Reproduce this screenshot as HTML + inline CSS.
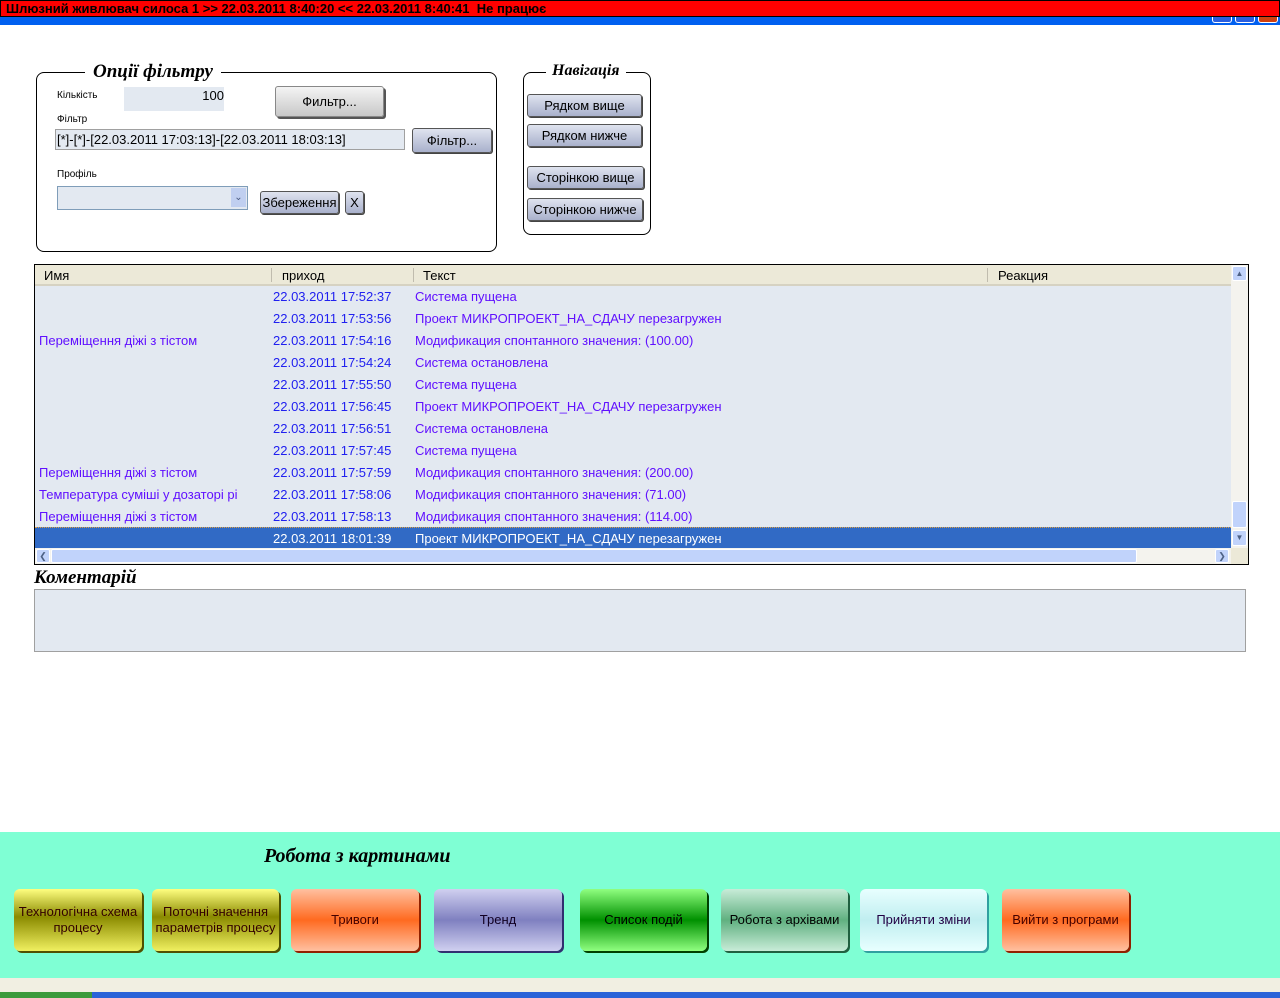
<!DOCTYPE html>
<html><head><meta charset="utf-8"><style>
*{box-sizing:border-box;margin:0;padding:0}
body{width:1280px;height:998px;position:relative;background:#fff;font-family:"Liberation Sans",sans-serif;overflow:hidden}
.abs{position:absolute}
.red{left:0;top:0;width:1280px;height:17px;background:#ff0000;border:1px solid #000;font:bold 13px "Liberation Sans",sans-serif;color:#000;line-height:15px;padding-left:5px;letter-spacing:0px}
.blue{left:0;top:17px;width:1280px;height:8px;background:#0060f0}
.grp{border:1px solid #000;border-radius:8px}
.leg{background:#fff;font:italic bold 19px "Liberation Serif",serif;padding:0 8px}
.lbl{font-size:10px;color:#000}
.inp{background:#e3e9f1;border:1px solid #a0a0a0}
.btn{border:1px solid #555;border-radius:3px;background:linear-gradient(#dfe3ef,#a9b1cc);font-size:13px;text-align:center;color:#000;box-shadow:1px 1px 0 #444}
.gbtn{background:linear-gradient(#f4f4f4,#c8c8c8);border:1px solid #888;box-shadow:2px 2px 0 #555}
.row{position:absolute;left:35px;width:1196px;height:22px;font-size:13px;line-height:22px;color:#6010ff}
.row span{position:absolute;top:0;white-space:nowrap}
.row .t{color:#2020f0}
.bb{position:absolute;top:889px;height:62px;border-radius:6px;font-size:13px;display:flex;align-items:center;justify-content:center;text-align:center;line-height:16px}
</style></head><body>
<div class="abs red">Шлюзний живлювач силоса 1 &gt;&gt; 22.03.2011 8:40:20 &lt;&lt; 22.03.2011 8:40:41&nbsp; Не працює</div>
<div class="abs blue"></div>
<div class="abs" style="left:1212px;top:17px;width:20px;height:6px;border:1px solid #fff;border-top:none;border-radius:0 0 3px 3px;background:#2a5fe0"></div>
<div class="abs" style="left:1235px;top:17px;width:20px;height:6px;border:1px solid #fff;border-top:none;border-radius:0 0 3px 3px;background:#2a5fe0"></div>
<div class="abs" style="left:1258px;top:17px;width:20px;height:6px;border:1px solid #fff;border-top:none;border-radius:0 0 3px 3px;background:#d04010"></div>

<div class="abs grp" style="left:36px;top:72px;width:461px;height:180px"></div>
<div class="abs leg" style="left:85px;top:61px">Опції фільтру</div>
<div class="abs lbl" style="left:57px;top:90px">Кількість</div>
<div class="abs inp" style="left:124px;top:87px;width:100px;height:24px;border:none;font-size:13px;text-align:right;line-height:18px">100</div>
<div class="abs btn gbtn" style="left:275px;top:86px;width:109px;height:31px;line-height:30px">Фильтр...</div>
<div class="abs lbl" style="left:57px;top:114px">Фільтр</div>
<div class="abs inp" style="left:55px;top:129px;width:350px;height:21px;font-size:13px;line-height:19px;padding-left:1px">[*]-[*]-[22.03.2011 17:03:13]-[22.03.2011 18:03:13]</div>
<div class="abs btn" style="left:412px;top:128px;width:80px;height:25px;line-height:24px">Фільтр...</div>
<div class="abs lbl" style="left:57px;top:169px">Профіль</div>
<div class="abs inp" style="left:57px;top:186px;width:191px;height:24px;border-color:#7f9db9;background:#e3e9f1"></div>
<div class="abs" style="left:231px;top:188px;width:15px;height:19px;background:#c0cff0;color:#4a5a80;font-size:10px;text-align:center;line-height:19px">&#8964;</div>
<div class="abs btn" style="left:260px;top:191px;width:79px;height:23px;line-height:22px">Збереження</div>
<div class="abs btn" style="left:345px;top:191px;width:19px;height:23px;line-height:22px">X</div>

<div class="abs grp" style="left:523px;top:72px;width:128px;height:163px"></div>
<div class="abs leg" style="left:546px;top:62px;font-size:16px;padding:0 6px">Навігація</div>
<div class="abs btn" style="left:527px;top:94px;width:115px;height:23px;line-height:22px">Рядком вище</div>
<div class="abs btn" style="left:527px;top:124px;width:115px;height:23px;line-height:22px">Рядком нижче</div>
<div class="abs btn" style="left:527px;top:166px;width:117px;height:23px;line-height:22px">Сторінкою вище</div>
<div class="abs btn" style="left:527px;top:198px;width:116px;height:23px;line-height:22px">Сторінкою нижче</div>

<div class="abs" style="left:34px;top:264px;width:1215px;height:301px;border:1px solid #000;background:#e3e9f1"></div>
<div class="abs" style="left:35px;top:265px;width:1196px;height:21px;background:#ece9d8;border-bottom:2px solid #d6d2c2;font-size:13px;line-height:21px">
<span class="abs" style="left:9px">Имя</span>
<span class="abs" style="left:236px;top:3px;height:14px;border-left:1px solid #c0bcae"></span>
<span class="abs" style="left:247px">приход</span>
<span class="abs" style="left:378px;top:3px;height:14px;border-left:1px solid #c0bcae"></span>
<span class="abs" style="left:388px">Текст</span>
<span class="abs" style="left:952px;top:3px;height:14px;border-left:1px solid #c0bcae"></span>
<span class="abs" style="left:963px">Реакция</span>
</div>
<div class="row" style="top:286px"><span class="t" style="left:238px">22.03.2011 17:52:37</span><span style="left:380px">Система пущена</span></div>
<div class="row" style="top:308px"><span class="t" style="left:238px">22.03.2011 17:53:56</span><span style="left:380px">Проект МИКРОПРОЕКТ_НА_СДАЧУ перезагружен</span></div>
<div class="row" style="top:330px"><span style="left:4px">Переміщення діжі з тістом</span><span class="t" style="left:238px">22.03.2011 17:54:16</span><span style="left:380px">Модификация спонтанного значения: (100.00)</span></div>
<div class="row" style="top:352px"><span class="t" style="left:238px">22.03.2011 17:54:24</span><span style="left:380px">Система остановлена</span></div>
<div class="row" style="top:374px"><span class="t" style="left:238px">22.03.2011 17:55:50</span><span style="left:380px">Система пущена</span></div>
<div class="row" style="top:396px"><span class="t" style="left:238px">22.03.2011 17:56:45</span><span style="left:380px">Проект МИКРОПРОЕКТ_НА_СДАЧУ перезагружен</span></div>
<div class="row" style="top:418px"><span class="t" style="left:238px">22.03.2011 17:56:51</span><span style="left:380px">Система остановлена</span></div>
<div class="row" style="top:440px"><span class="t" style="left:238px">22.03.2011 17:57:45</span><span style="left:380px">Система пущена</span></div>
<div class="row" style="top:462px"><span style="left:4px">Переміщення діжі з тістом</span><span class="t" style="left:238px">22.03.2011 17:57:59</span><span style="left:380px">Модификация спонтанного значения: (200.00)</span></div>
<div class="row" style="top:484px"><span style="left:4px">Температура суміші у дозаторі рі</span><span class="t" style="left:238px">22.03.2011 17:58:06</span><span style="left:380px">Модификация спонтанного значения: (71.00)</span></div>
<div class="row" style="top:506px"><span style="left:4px">Переміщення діжі з тістом</span><span class="t" style="left:238px">22.03.2011 17:58:13</span><span style="left:380px">Модификация спонтанного значения: (114.00)</span></div>
<div class="row" style="top:527px;background:#316ac5;color:#fff;border-top:1px dotted #e0a040"><span style="left:238px;color:#fff">22.03.2011 18:01:39</span><span style="left:380px">Проект МИКРОПРОЕКТ_НА_СДАЧУ перезагружен</span></div>
<div class="abs" style="left:1231px;top:265px;width:17px;height:283px;background:#f4f3ee"></div>
<div class="abs" style="left:1232px;top:266px;width:15px;height:15px;background:#c1d3fb;border:1px solid #fff;border-radius:2px;font-size:8px;color:#4d6185;text-align:center;line-height:13px">&#9650;</div>
<div class="abs" style="left:1232px;top:501px;width:15px;height:27px;background:#c1d3fb;border:1px solid #fff;border-radius:2px"></div>
<div class="abs" style="left:1232px;top:530px;width:15px;height:16px;background:#c1d3fb;border:1px solid #fff;border-radius:2px;font-size:8px;color:#4d6185;text-align:center;line-height:14px">&#9660;</div>
<div class="abs" style="left:35px;top:548px;width:1196px;height:16px;background:#f4f3ee"></div>
<div class="abs" style="left:36px;top:549px;width:14px;height:14px;background:#c1d3fb;border:1px solid #fff;border-radius:2px;font-size:9px;color:#4d6185;text-align:center;line-height:12px">&#10094;</div>
<div class="abs" style="left:51px;top:549px;width:1086px;height:14px;background:#c1d3fb;border:1px solid #fff;border-radius:2px"></div>
<div class="abs" style="left:1215px;top:549px;width:14px;height:14px;background:#c1d3fb;border:1px solid #fff;border-radius:2px;font-size:9px;color:#4d6185;text-align:center;line-height:12px">&#10095;</div>
<div class="abs" style="left:1231px;top:548px;width:17px;height:16px;background:#ece9d8"></div>

<div class="abs" style="left:34px;top:567px;font:italic bold 19px 'Liberation Serif',serif">Коментарій</div>
<div class="abs" style="left:34px;top:589px;width:1212px;height:63px;background:#e3e9f1;border:1px solid #a0a0a0"></div>

<div class="abs" style="left:0;top:832px;width:1280px;height:146px;background:#7fffd4"></div>
<div class="abs" style="left:264px;top:845px;font:italic bold 20px 'Liberation Serif',serif">Робота з картинами</div>
<div class="bb" style="left:14px;width:128px;background:linear-gradient(#ffff80,#8a8a00 45%,#f0f060);box-shadow:2px 2px 0 #505000;color:#300">Технологічна схема<br>процесу</div>
<div class="bb" style="left:152px;width:127px;background:linear-gradient(#ffff80,#8a8a00 45%,#f0f060);box-shadow:2px 2px 0 #505000;color:#300">Поточні значення<br>параметрів процесу</div>
<div class="bb" style="left:291px;width:128px;background:linear-gradient(#ffc0a0,#ff6a20 50%,#ffc0a0);box-shadow:2px 2px 0 #902000;color:#400">Тривоги</div>
<div class="bb" style="left:434px;width:128px;background:linear-gradient(#d0d0f0,#7f80c0 50%,#d0d0f0);box-shadow:2px 2px 0 #303070;color:#102">Тренд</div>
<div class="bb" style="left:580px;width:127px;background:linear-gradient(#90ff80,#009000 50%,#90ff80);box-shadow:2px 2px 0 #004000;color:#000">Список подій</div>
<div class="bb" style="left:721px;width:127px;background:linear-gradient(#c8ecd8,#60b080 50%,#c8ecd8);box-shadow:2px 2px 0 #206040;color:#000">Робота з архівами</div>
<div class="bb" style="left:860px;width:127px;background:linear-gradient(#e8ffff,#c0eef0 50%,#e8ffff);box-shadow:2px 2px 0 #30a0a0;color:#204">Прийняти зміни</div>
<div class="bb" style="left:1002px;width:127px;background:linear-gradient(#ffc0a0,#ff6a20 50%,#ffc0a0);box-shadow:2px 2px 0 #902000;color:#400">Вийти з програми</div>
<div class="abs" style="left:0;top:978px;width:1280px;height:14px;background:#f1efe2"></div>
<div class="abs" style="left:0;top:992px;width:1280px;height:6px;background:#2a63d8"></div>
<div class="abs" style="left:0;top:992px;width:92px;height:6px;background:#3c9a3c"></div>
</body></html>
